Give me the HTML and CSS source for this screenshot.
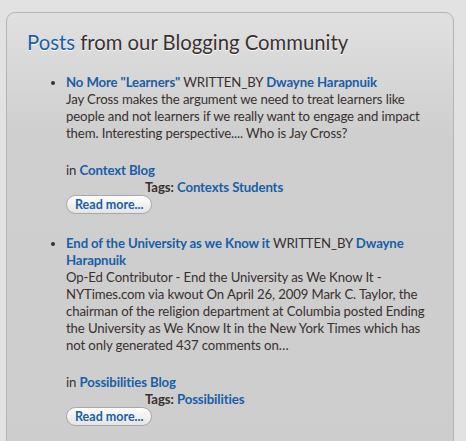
FILE: index.html
```html
<!DOCTYPE html>
<html lang="en">
<head>
    <meta charset="UTF-8">
    <title>Posts from our Blogging Community</title>
    <link rel="stylesheet" href="styles.css">
</head>
<body>
    <div class="panel">
        <h2><span class="accent">Posts</span> from our Blogging Community</h2>
        <ul class="posts">
            <li>
                <a href="#" class="link">No More "Learners"</a> WRITTEN_BY <a href="#" class="link">Dwayne Harapnuik</a>
                <p class="excerpt">Jay Cross makes the argument we need to treat learners like people and not learners if we really want to engage and impact them. Interesting perspective.... Who is Jay Cross?</p>
                <div class="blog">in <a href="#" class="link">Context Blog</a></div>
                <div class="tags"><b>Tags:</b> <a href="#" class="link">Contexts</a> <a href="#" class="link">Students</a></div>
                <button type="button" class="read-more">Read more...</button>
            </li>
            <li>
                <a href="#" class="link">End of the University as we Know it</a> WRITTEN_BY <a href="#" class="link">Dwayne Harapnuik</a>
                <p class="excerpt">Op-Ed Contributor - End the University as We Know It - NYTimes.com via kwout On April 26, 2009 Mark C. Taylor, the chairman of the religion department at Columbia posted Ending the University as We Know It in the New York Times which has not only generated 437 comments on…</p>
                <div class="blog">in <a href="#" class="link">Possibilities Blog</a></div>
                <div class="tags"><b>Tags:</b> <a href="#" class="link">Possibilities</a></div>
                <button type="button" class="read-more">Read more...</button>
            </li>
        </ul>
    </div>
</body>
</html>
```

FILE: styles.css
```css
body {
    font-family: Lato, "Open Sans", sans-serif;
    background-color: #e2e2e2;
    color: #3a3030;
    margin: 0;
    padding: 12px 12px 0 6px;
    height: 429px;
    overflow: hidden;
}
.panel {
    border: 1px solid #b4b4b4;
    border-radius: 9px;
    background: linear-gradient(#e0e0e0, #cfcfcf 120px, #cdcdcd);
    padding: 0 20px 40px 20px;
    min-height: 460px;
}
h2 {
    font-weight: normal;
    font-size: 20.3px;
    margin: 0;
    padding: 17px 0 0 0;
    line-height: 24px;
    text-shadow: 0 1px 0 #fff;
}
.accent {
    color: #1a5ea6;
}
.posts {
    margin: 20px 0 0 0;
    padding-left: 39px;
    font-size: 13.2px;
    letter-spacing: -0.12px;
    line-height: 17px;
}
.posts li {
    margin-bottom: 21px;
}
.link {
    color: #1a5ea6;
    font-weight: bold;
    text-decoration: none;
}
.excerpt {
    margin: 0 0 20px 0;
}
.tags {
    padding-left: 79px;
}
.read-more {
    font-family: inherit;
    font-size: 12.5px;
    font-weight: bold;
    color: #1a5ea6;
    background: linear-gradient(#ffffff, #e4e4e4);
    border: 1px solid #a8a8a8;
    border-radius: 10px;
    padding: 0 8px;
    height: 19px;
    line-height: 15px;
    margin-top: -1px;
}
```
